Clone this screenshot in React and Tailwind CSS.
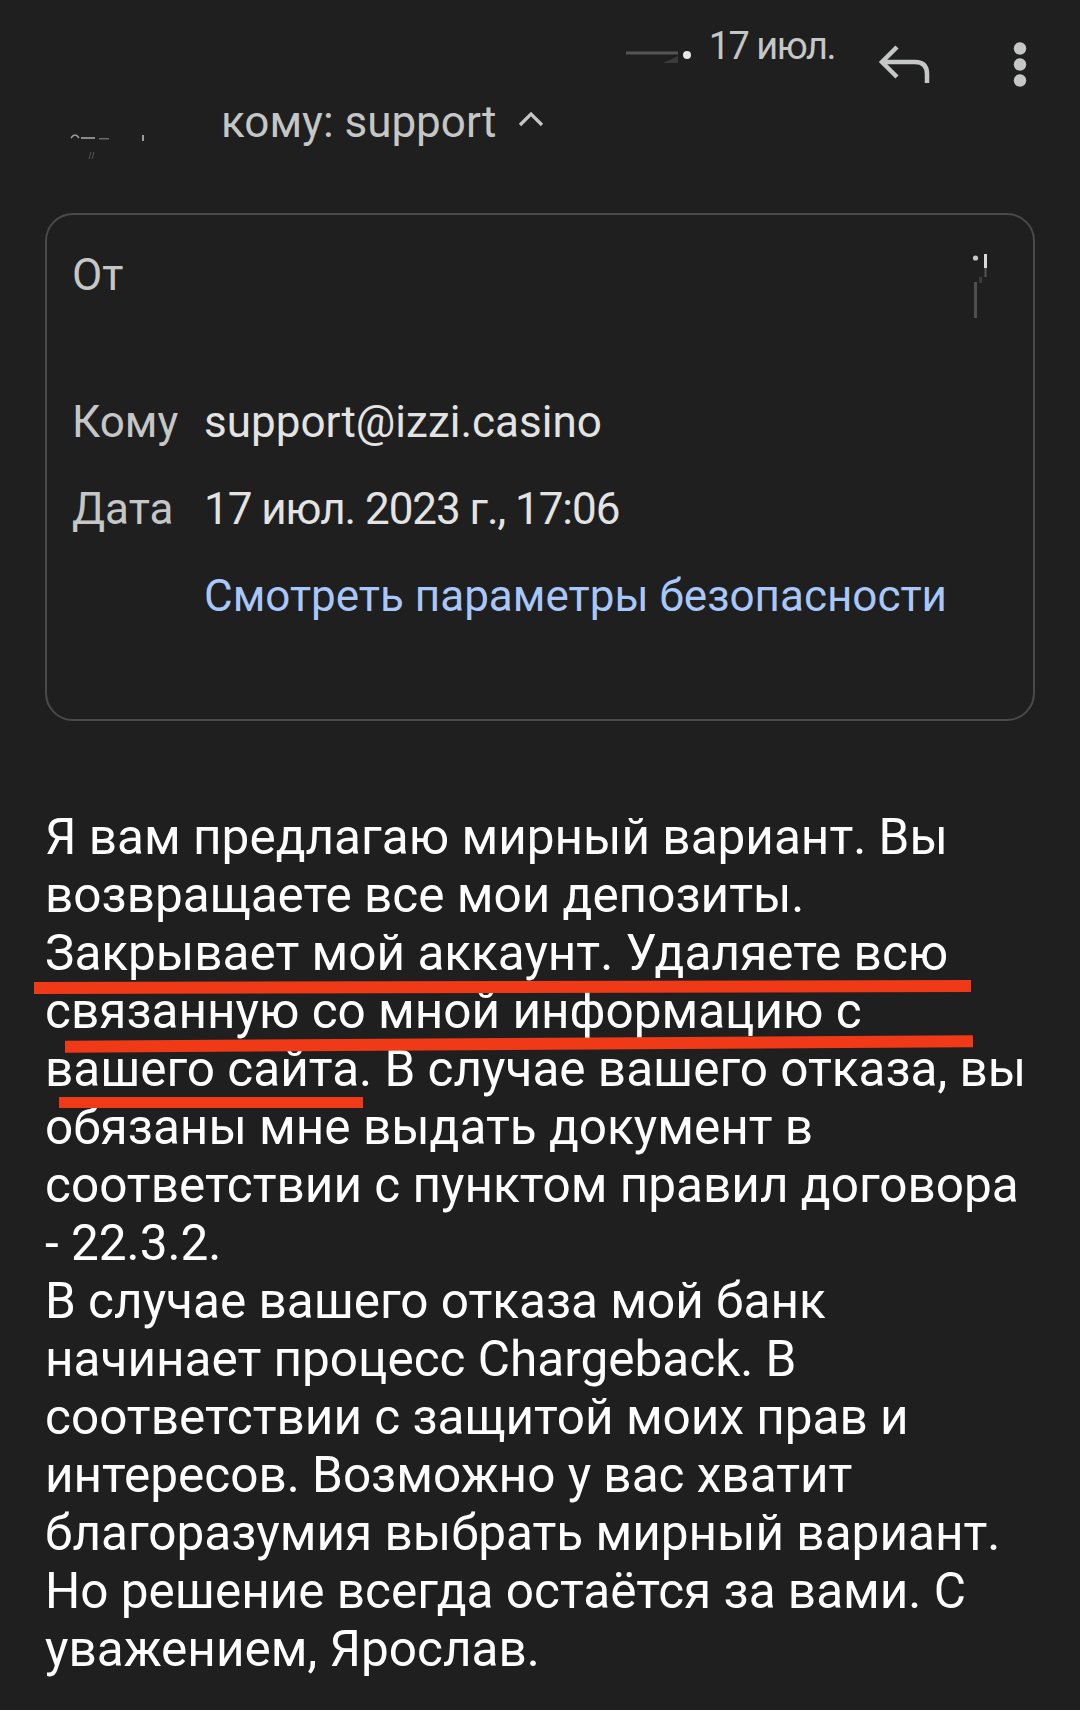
import React from "react";

const bodyLines = [
  "Я вам предлагаю мирный вариант. Вы",
  "возвращаете все мои депозиты.",
  "Закрывает мой аккаунт. Удаляете всю",
  "связанную со мной информацию с",
  "вашего сайта. В случае вашего отказа, вы",
  "обязаны мне выдать документ в",
  "соответствии с пунктом правил договора",
  "- 22.3.2.",
  "В случае вашего отказа мой банк",
  "начинает процесс Chargeback. В",
  "соответствии с защитой моих прав и",
  "интересов. Возможно у вас хватит",
  "благоразумия выбрать мирный вариант.",
  "Но решение всегда остаётся за вами. С",
  "уважением, Ярослав.",
];

function ReplyIcon() {
  return (
    <svg width="56" height="44" viewBox="0 0 56 44" className="mt-[42px] ml-[40px] shrink-0">
      <path d="M22 5 L7 20 L22 35" fill="none" stroke="#c4c7c5" strokeWidth="4.5" strokeLinejoin="miter" />
      <path d="M8 20 H40 Q52 20 52 32 V41" fill="none" stroke="#c4c7c5" strokeWidth="4.5" />
    </svg>
  );
}

function MoreIcon() {
  return (
    <svg width="14" height="46" viewBox="0 0 14 46" className="mt-[42px] ml-[82px] shrink-0">
      <circle cx="7" cy="6.5" r="6.2" fill="#c4c7c5" />
      <circle cx="7" cy="22.5" r="6.2" fill="#c4c7c5" />
      <circle cx="7" cy="38.5" r="6.2" fill="#c4c7c5" />
    </svg>
  );
}

export default function App() {
  return (
    <div className="min-h-[1710px] w-[1080px] bg-[#1f1f1f] font-[Roboto,sans-serif] overflow-hidden">
      {/* header row 1 */}
      <div className="flex items-start justify-end pr-[53px] h-[88px]">
        <svg width="70" height="20" viewBox="0 0 70 20" className="mt-[45px] shrink-0">
          <rect x="3" y="6.5" width="52" height="3" fill="#555" />
          <path d="M40 18 L55 18 L55 11 Z" fill="#3a3a3a" />
          <circle cx="64" cy="10" r="4" fill="#e8e8e8" />
        </svg>
        <div className="ml-[16px] mt-[23px] text-[38px] leading-[46px] tracking-[-1.5px] text-[#c4c7c5] whitespace-nowrap">
          17 июл.
        </div>
        <ReplyIcon />
        <MoreIcon />
      </div>

      {/* header row 2 */}
      <div className="flex items-start h-[52px] mt-[8px] pl-[69px]">
        <svg width="80" height="32" viewBox="0 0 80 32" className="mt-[34px] shrink-0">
          <path d="M2 8 Q6 2 10 8" fill="none" stroke="#9a9a9a" strokeWidth="1.5" />
          <rect x="12" y="7" width="14" height="2" fill="#8a8a8a" />
          <rect x="30" y="8" width="10" height="1.5" fill="#6a6a6a" />
          <rect x="73" y="5" width="2" height="6" fill="#9a9a9a" />
          <path d="M22 22 L20 29 M25 22 L23 29" stroke="#555" strokeWidth="1" />
        </svg>
        <div className="ml-[72px] text-[44px] leading-[52px] text-[#c4c7c5] whitespace-nowrap">
          кому: support
        </div>
        <svg width="26" height="16" viewBox="0 0 26 16" className="ml-[22px] mt-[15px] shrink-0">
          <polyline points="2,14 13,3 24,14" fill="none" stroke="#c4c7c5" strokeWidth="3.2" />
        </svg>
      </div>

      {/* details card */}
      <div className="mx-[45px] mt-[65px] border-2 border-[#4a4a4a] rounded-[28px] pt-[34px] pb-[97px] pl-[25px] pr-[26px] flex flex-col gap-[35px] text-[44px] leading-[52px]">
        <div className="flex items-start h-[112px]">
          <div className="w-[132px] shrink-0 text-[#c4c7c5]">От</div>
          <div className="flex-1" />
          <svg width="20" height="72" viewBox="0 0 20 72" className="mt-[1px] mr-[16px] shrink-0">
            <circle cx="4.5" cy="8" r="2.6" fill="#c8c8c8" />
            <rect x="13" y="4" width="3" height="14" fill="#d8d8d8" />
            <rect x="13.5" y="18" width="2" height="9" fill="#555" />
            <rect x="8" y="27" width="3" height="6" fill="#3a3a3a" />
            <rect x="3" y="32" width="3" height="36" fill="#4e4e4e" />
          </svg>
        </div>
        <div className="flex items-start">
          <div className="w-[132px] shrink-0 text-[#c4c7c5]">Кому</div>
          <div className="text-[#e3e3e3] whitespace-nowrap">support@izzi.casino</div>
        </div>
        <div className="flex items-start">
          <div className="w-[132px] shrink-0 text-[#c4c7c5]">Дата</div>
          <div className="text-[#e3e3e3] whitespace-nowrap tracking-[-1.05px]">17 июл. 2023 г., 17:06</div>
        </div>
        <div className="flex items-start">
          <div className="w-[132px] shrink-0" />
          <div className="text-[#a8c7fa] whitespace-nowrap">Смотреть параметры безопасности</div>
        </div>
      </div>

      {/* body */}
      <div className="relative mt-[87px] px-[45px] pb-[30px] text-white text-[49.5px] leading-[58px]">
        {bodyLines.map((l, i) => (
          <div key={i} className="whitespace-nowrap">{l}</div>
        ))}
        <div className="absolute left-[34px] top-[173px] w-[937px] h-[12px] bg-[#f03a17] -rotate-[0.12deg]" />
        <div className="absolute left-[65px] top-[230px] w-[908px] h-[12px] bg-[#f03a17] -rotate-[0.35deg]" />
        <div className="absolute left-[59px] top-[289px] w-[304px] h-[11px] bg-[#f03a17]" />
      </div>
    </div>
  );
}
